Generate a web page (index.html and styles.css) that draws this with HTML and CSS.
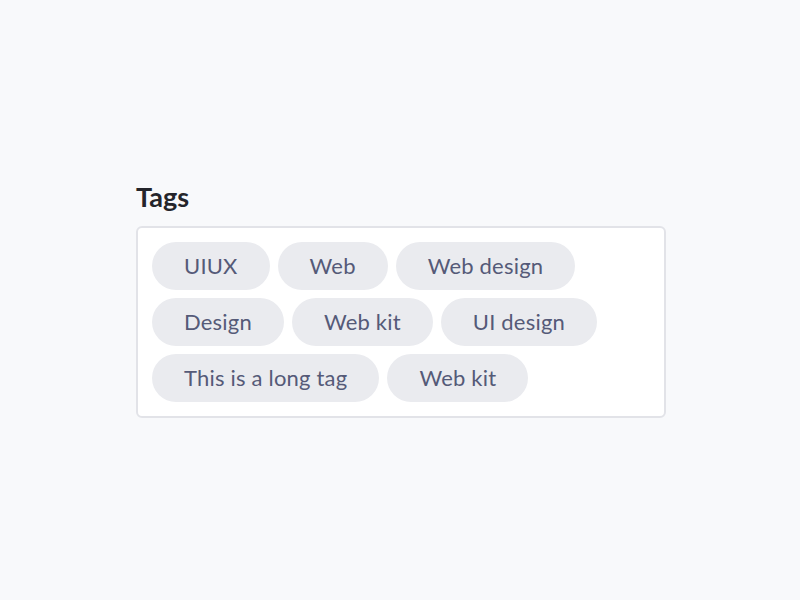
FILE: index.html
```html
<!DOCTYPE html>
<html lang="en">

<head>
    <meta charset="UTF-8">
    <meta name="viewport" content="width=device-width, initial-scale=1.0">
    <title>Tags</title>
    <link rel="stylesheet" href="styles.css">
</head>

<body>
    <div class="field">
        <h2 class="label">Tags</h2>
        <div class="tag-box">
            <span class="tag">UIUX</span>
            <span class="tag">Web</span>
            <span class="tag">Web design</span>
            <span class="tag">Design</span>
            <span class="tag">Web kit</span>
            <span class="tag">UI design</span>
            <span class="tag">This is a long tag</span>
            <span class="tag">Web kit</span>
        </div>
    </div>
</body>

</html>
```

FILE: styles.css
```css
body {
    margin: 0;
    background-color: #f8f9fb;
    font-family: Lato, "Noto Sans", sans-serif;
}

.field {
    width: 530px;
    margin: 181px 0 0 136px;
}

.label {
    margin: 0 0 13px 0;
    font-size: 27px;
    line-height: 32px;
    font-weight: 700;
    color: #24252b;
}

.tag-box {
    display: flex;
    flex-wrap: wrap;
    gap: 8px;
    padding: 14px;
    background-color: #fff;
    border: 2px solid #e2e3e8;
    border-radius: 6px;
}

.tag {
    height: 48px;
    line-height: 48px;
    padding: 0 32px;
    border-radius: 24px;
    background-color: #eaebef;
    color: #555a78;
    font-size: 22px;
    letter-spacing: 0.2px;
}
```
